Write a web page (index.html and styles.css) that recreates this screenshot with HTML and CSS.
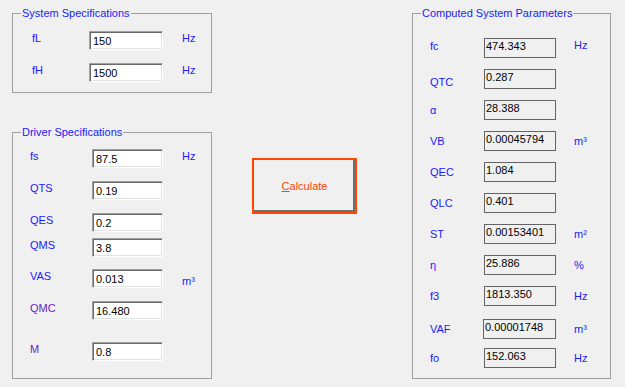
FILE: index.html
```html
<!DOCTYPE html>
<html lang="en">
<head>
    <meta charset="UTF-8">
    <title>Enclosure Calculator</title>
    <link rel="stylesheet" href="styles.css">
</head>
<body>

    <div class="form">
        <div class="left-col">
            <!-- System inputs -->
            <fieldset class="group sys">
                <legend>System Specifications</legend>
                <div class="fields">
                    <div class="row"><label for="fL">fL</label><input type="text" id="fL" value="150"><span class="unit">Hz</span></div>
                    <div class="row"><label for="fH">fH</label><input type="text" id="fH" value="1500"><span class="unit">Hz</span></div>
                </div>
            </fieldset>

            <!-- Driver inputs -->
            <fieldset class="group driver">
                <legend>Driver Specifications</legend>
                <div class="fields">
                    <div class="row"><label for="fs">fs</label><input type="text" id="fs" value="87.5"><span class="unit">Hz</span></div>
                    <div class="row"><label for="qts">QTS</label><input type="text" id="qts" value="0.19"></div>
                    <div class="row"><label for="qes">QES</label><input type="text" id="qes" value="0.2"></div>
                    <div class="row close"><label for="qms">QMS</label><input type="text" id="qms" value="3.8"></div>
                    <div class="row snug"><label for="vas">VAS</label><input type="text" id="vas" value="0.013"><span class="unit low">m³</span></div>
                    <div class="row"><label for="qmc" class="alt">QMC</label><input type="text" id="qmc" value="16.480"></div>
                    <div class="row far"><label for="m" class="alt">M</label><input type="text" id="m" value="0.8"></div>
                </div>
            </fieldset>
        </div>

        <div class="mid-col">
            <button class="calc" onclick="calculate()"><u>C</u>alculate</button>
        </div>

        <!-- Results -->
        <fieldset class="group computed">
            <legend>Computed System Parameters</legend>
            <div class="fields">
                <div class="row"><span class="name up">fc</span><div class="box" id="fc">474.343</div><span class="unit up2">Hz</span></div>
                <div class="row"><span class="name down">QTC</span><div class="box" id="qtc">0.287</div></div>
                <div class="row"><span class="name">α</span><div class="box" id="alpha">28.388</div></div>
                <div class="row"><span class="name">VB</span><div class="box" id="vb">0.00045794</div><span class="unit">m³</span></div>
                <div class="row"><span class="name">QEC</span><div class="box" id="qec">1.084</div></div>
                <div class="row"><span class="name">QLC</span><div class="box" id="qlc">0.401</div></div>
                <div class="row"><span class="name">ST</span><div class="box" id="st">0.00153401</div><span class="unit">m²</span></div>
                <div class="row"><span class="name">η</span><div class="box" id="eta">25.886</div><span class="unit">%</span></div>
                <div class="row"><span class="name">f3</span><div class="box" id="f3">1813.350</div><span class="unit">Hz</span></div>
                <div class="row wide"><span class="name">VAF</span><div class="box shifted" id="vaf">0.00001748</div><span class="unit">m³</span></div>
                <div class="row narrow"><span class="name">fo</span><div class="box" id="fo">152.063</div><span class="unit">Hz</span></div>
            </div>
        </fieldset>
    </div>

    <script>
        function calculate() {
        }
    </script>

</body>
</html>
```

FILE: styles.css
```css
/* Page */
body {
    margin: 0;
    background-color: #f0f0f0;
    font-family: "Liberation Sans", Arial, sans-serif;
    font-size: 11px;
    line-height: 13px;
    color: #0000ff;
}

.form {
    display: flex;
    align-items: flex-start;
    padding: 7px 0 0 12px;
}

.left-col {
    width: 200px;
}

.mid-col {
    width: 200px;
    padding: 151px 0 0 40px;
    box-sizing: border-box;
}

/* Group boxes */
.group {
    margin: 0;
    border: 1px solid #a0a0a0;
    padding: 0 0 10px 8px;
    box-sizing: border-box;
    min-inline-size: 0;
}

.group legend {
    padding: 0 1px;
    font-size: 11px;
    line-height: 13px;
    color: #1a1aff;
}

.sys {
    width: 200px;
    padding-top: 11px;
}

.driver {
    width: 200px;
    margin-top: 33px;
    padding-top: 10px;
    padding-bottom: 17px;
}

.computed {
    width: 199px;
    padding-top: 18px;
}

.fields {
    display: flex;
    flex-direction: column;
    gap: 13px;
}

.row {
    display: grid;
    align-items: start;
}

.sys .fields { padding-left: 11px; }
.sys .row { grid-template-columns: 57px 74px auto; }

.driver .fields { padding-left: 9px; }
.driver .row { grid-template-columns: 62px 71px auto; }
.driver .row.close { margin-top: -7px; }
.driver .row.snug { margin-top: -1px; }
.driver .row.far { margin-top: 9px; }

label {
    margin-top: 1px;
    color: #1a1aff;
}

label.alt {
    color: #6a22c4;
}

.unit {
    margin: 1px 0 0 19px;
    color: #1a1aff;
}

.unit.low {
    margin-top: 6px;
}

/* Sunken text inputs */
input[type="text"] {
    height: 19px;
    margin: 0;
    padding: 1px 0 0 3px;
    box-sizing: border-box;
    border: 1px solid;
    border-color: #a0a0a0 #ffffff #ffffff #a0a0a0;
    box-shadow: inset 1px 1px 0 #696969, inset -1px -1px 0 #e3e3e3;
    background-color: #fff;
    font-family: "Liberation Sans", Arial, sans-serif;
    font-size: 11px;
    color: #000;
    outline: none;
}

.sys input[type="text"] { width: 74px; }
.driver input[type="text"] { width: 71px; }

/* Result rows */
.computed .fields {
    padding-left: 9px;
    gap: 11px;
}

.computed .row {
    grid-template-columns: 54px 72px auto;
    align-items: center;
}

.computed .row.wide { margin-top: 2px; }
.computed .row.narrow { margin-top: -2px; }

.name {
    color: #1a1aff;
}

.name.up { margin-bottom: 4px; }
.name.down { margin-top: 6px; }

.computed .unit {
    margin: 0 0 0 18px;
}

.computed .unit.up2 { margin-bottom: 6px; }

.box {
    height: 20px;
    padding: 1px 0 0 1px;
    box-sizing: border-box;
    border: 1px solid #646464;
    color: #000;
    white-space: nowrap;
    overflow: hidden;
}

.box.shifted {
    margin-left: -1px;
}

/* Calculate button */
.calc {
    width: 105px;
    height: 56px;
    padding: 0;
    border: 2px solid #ff4500;
    background-color: #f0f0f0;
    box-shadow: inset -2px -2px 0 #6e6e6e;
    font-family: "Liberation Sans", Arial, sans-serif;
    font-size: 11px;
    color: #ff4500;
    cursor: pointer;
}
```
